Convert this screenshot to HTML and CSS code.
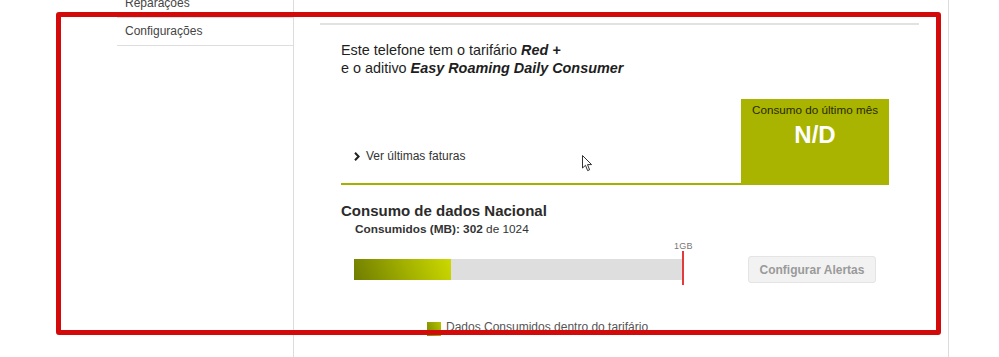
FILE: index.html
```html
<!DOCTYPE html>
<html lang="pt">
<head>
<meta charset="utf-8">
<title>Consumo</title>
<link rel="stylesheet" href="styles.css">
</head>
<body>
<div class="page">
  <div class="gutter"></div>
  <aside class="sidebar">
    <div class="nav-item first">Reparações</div>
    <div class="nav-item">Configurações</div>
  </aside>
  <main class="main">
    <div class="top-rule"></div>
    <div class="content">
      <p class="intro">Este telefone tem o tarifário <b><i>Red +</i></b><br>e o aditivo <b><i>Easy Roaming Daily Consumer</i></b></p>
      <div class="summary">
        <div class="summary-left">
          <a class="link"><svg class="chev" width="6" height="9" viewBox="0 0 6 9"><path d="M1 0.8 L4.6 4.5 L1 8.2" fill="none" stroke="#222" stroke-width="2"/></svg>Ver últimas faturas</a>
        </div>
        <div class="summary-box">
          <div class="box-label">Consumo do último mês</div>
          <div class="box-value">N/D</div>
        </div>
      </div>
      <h2 class="section-title">Consumo de dados Nacional</h2>
      <div class="usage"><b>Consumidos (MB): 302</b> de 1024</div>
      <div class="gauge-row">
        <div class="bar">
          <div class="bar-fill" style="width:29.5%"></div>
          <div class="marker"><span class="marker-label">1GB</span></div>
        </div>
        <button class="btn">Configurar Alertas</button>
      </div>
      <div class="legend"><span class="swatch"></span>Dados Consumidos dentro do tarifário</div>
    </div>
  </main>
</div>
<div class="annotation"></div>
<svg class="cursor" width="11" height="17" viewBox="0 0 11 17"><path d="M0.5 0.5 L0.5 13 L3.5 10.3 L5.6 15.6 L7.6 14.8 L5.5 9.6 L9.6 9.6 Z" fill="#fff" stroke="#333" stroke-width="1"/></svg>
</body>
</html>
```
FILE: styles.css
```css
html, body {
  margin: 0;
  padding: 0;
  background: #fff;
}
body {
  font-family: "Liberation Sans", Arial, sans-serif;
  position: relative;
  height: 357px;
  overflow: hidden;
}
.page {
  display: flex;
  height: 357px;
}
.gutter {
  width: 117px;
  flex: none;
}
.sidebar {
  width: 176px;
  flex: none;
  border-right: 1px solid #dcdcdc;
}
.nav-item {
  height: 27px;
  line-height: 27px;
  padding-left: 8px;
  font-size: 12px;
  color: #444;
  border-bottom: 1px solid #dedede;
}
.nav-item.first {
  margin-top: -10px;
}
.main {
  width: 599px;
  flex: none;
  padding: 0 29px 0 26px;
  border-right: 1px solid #dcdcdc;
}
.top-rule {
  margin-top: 23px;
  height: 2px;
  background: #e2e2e2;
}
.content {
  padding-left: 21px;
}
.intro {
  margin: 16px 0 0;
  font-size: 14.4px;
  line-height: 18px;
  color: #1e1e1e;
}
.summary {
  display: flex;
  margin-top: 22px;
  height: 86px;
}
.summary-left {
  width: 400px;
  border-bottom: 2px solid #a4b000;
  display: flex;
  align-items: flex-end;
  padding-bottom: 20px;
  box-sizing: border-box;
}
.link {
  display: flex;
  align-items: center;
  padding-left: 13px;
  font-size: 12px;
  line-height: 14px;
  color: #333;
}
.chev {
  margin-right: 6px;
}
.summary-box {
  width: 148px;
  background: #a9b400;
  text-align: center;
  padding-top: 4px;
  box-sizing: border-box;
}
.box-label {
  font-size: 11.7px;
  line-height: 14px;
  color: #2a2a00;
}
.box-value {
  margin-top: 4px;
  font-size: 24px;
  line-height: 28px;
  font-weight: bold;
  color: #fff;
}
.section-title {
  margin: 17px 0 0;
  font-size: 15px;
  line-height: 18px;
  font-weight: bold;
  color: #2b2b2b;
}
.usage {
  margin-top: 2px;
  padding-left: 14px;
  font-size: 11.8px;
  line-height: 14px;
  color: #333;
}
.gauge-row {
  display: flex;
  align-items: center;
  margin-top: 20px;
  padding-left: 13px;
}
.bar {
  position: relative;
  width: 329px;
  height: 21px;
  background: #dedede;
}
.bar-fill {
  height: 100%;
  background: linear-gradient(65deg, #6f7c00 0%, #a3b100 55%, #ccd900 100%);
}
.marker {
  position: absolute;
  right: -1px;
  top: -8px;
  bottom: -5px;
  width: 2px;
  background: #e23b3b;
}
.marker-label {
  position: absolute;
  bottom: 100%;
  left: -8px;
  font-size: 9px;
  line-height: 10px;
  color: #777;
  letter-spacing: 0.3px;
}
.btn {
  margin-left: 65px;
  width: 128px;
  height: 27px;
  padding: 0;
  background: #f2f2f2;
  border: 1px solid #e4e4e4;
  border-radius: 3px;
  font-family: "Liberation Sans", Arial, sans-serif;
  font-size: 12px;
  font-weight: bold;
  color: #9a9a9a;
}
.legend {
  display: flex;
  align-items: center;
  margin-top: 35px;
  padding-left: 86px;
  font-size: 12px;
  line-height: 14px;
  color: #555;
}
.swatch {
  width: 14px;
  height: 14px;
  margin-right: 5px;
  margin-top: 4px;
  background: linear-gradient(65deg, #7a8800, #b5c300);
}
.annotation {
  position: absolute;
  left: 56px;
  top: 12px;
  width: 885px;
  height: 323px;
  box-sizing: border-box;
  border: 5px solid #d20a0a;
  border-radius: 3px;
  pointer-events: none;
}
.cursor {
  position: absolute;
  left: 582px;
  top: 155px;
}
```
